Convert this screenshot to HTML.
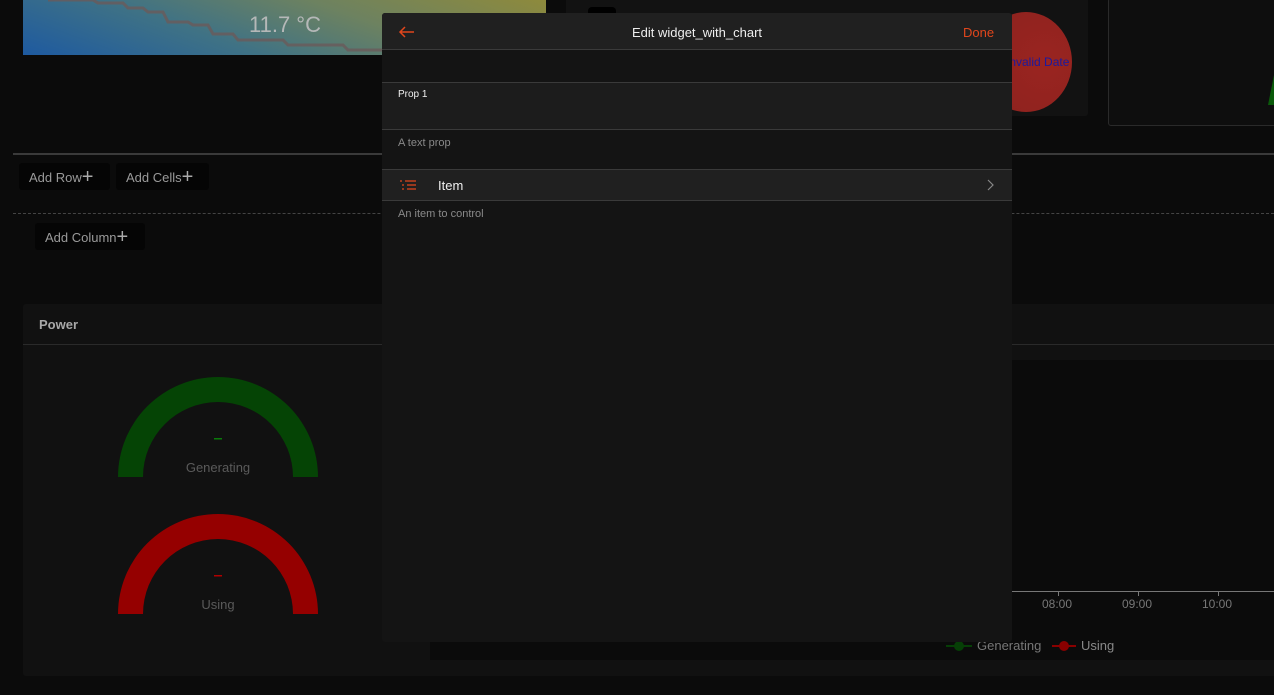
<!DOCTYPE html>
<html><head><meta charset="utf-8"><style>
*{margin:0;padding:0;box-sizing:border-box}
body{width:1274px;height:695px;background:#0b0b0b;position:relative;overflow:hidden;font-family:"Liberation Sans",sans-serif;}
.a{position:absolute}
.btn{position:absolute;background:#050505;border-radius:3px;color:#9a9a9a;font-size:13px;height:27px;line-height:27px;padding-left:10px}
.btn span{font-size:20px;font-weight:300;color:#aaa;position:relative;top:1px}
</style></head><body>
<div class="a" style="left:23px;top:0;width:523px;height:55px;background:linear-gradient(20deg,#1e5aa0 0%,#3f7285 35%,#6d8260 65%,#8e8a3c 100%)"></div>
<svg class="a" style="left:23px;top:0" width="523" height="55"><polyline points="25,0 40,0 70,0 75,3 100,3 105,8 120,8 125,12 140,12 145,22 165,22 170,25 185,25 190,34 210,34 215,40 260,40 265,45 320,45 325,50 380,50" fill="none" stroke="#6a5a5a" stroke-width="3" opacity=".8"/><text x="262" y="32" font-size="22" fill="#b5b8b8" text-anchor="middle" font-family="Liberation Sans">11.7 °C</text></svg>
<div class="a" style="left:566px;top:0;width:522px;height:116px;background:#121212;border-radius:0 0 3px 3px"></div>
<div class="a" style="left:588px;top:7px;width:28px;height:20px;background:#000;border-radius:4px"></div>
<div class="a" style="left:980px;top:12px;width:92px;height:100px;border-radius:50%;background:radial-gradient(circle at 70% 50%,#9a2420,#8c221e)"></div>
<div class="a" style="left:1006px;top:55px;color:#1a1aa0;font-size:12px">Invalid Date</div>
<div class="a" style="left:1108px;top:-2px;width:170px;height:128px;border:1px solid #2a2a2a;border-radius:3px;background:#0e0e0e"></div>
<div class="a" style="left:1268px;top:75px;width:6px;height:30px;background:#0a5a0a;clip-path:polygon(100% 0,100% 100%,0 100%)"></div>
<div class="a" style="left:13px;top:153px;width:1261px;height:2px;background:#3a3a3a"></div>
<div class="a" style="left:13px;top:213px;width:1261px;border-top:1px dashed #444"></div>
<div class="btn" style="left:19px;top:163px;width:91px">Add Row<span>+</span></div>
<div class="btn" style="left:116px;top:163px;width:93px">Add Cells<span>+</span></div>
<div class="btn" style="left:35px;top:223px;width:110px">Add Column<span>+</span></div>
<div class="a" style="left:23px;top:304px;width:1260px;height:372px;background:#111;border-radius:3px"></div>
<div class="a" style="left:39px;top:317px;color:#a8a8a8;font-weight:bold;font-size:13px">Power</div>
<div class="a" style="left:23px;top:344px;width:1260px;height:1px;background:#2a2a2a"></div>
<div class="a" style="left:430px;top:360px;width:844px;height:300px;background:#0b0b0b"></div>
<div class="a" style="left:1012px;top:591px;width:262px;height:1px;background:#777"></div>
<div class="a" style="left:1058px;top:591px;width:1px;height:5px;background:#777"></div>
<div class="a" style="left:1138px;top:591px;width:1px;height:5px;background:#777"></div>
<div class="a" style="left:1218px;top:591px;width:1px;height:5px;background:#777"></div>
<div class="a" style="left:1042px;top:597px;color:#777;font-size:12px">08:00</div>
<div class="a" style="left:1122px;top:597px;color:#777;font-size:12px">09:00</div>
<div class="a" style="left:1202px;top:597px;color:#777;font-size:12px">10:00</div>
<svg class="a" style="left:940px;top:634px" width="200" height="22"><line x1="6" y1="12" x2="32" y2="12" stroke="#063f06" stroke-width="2"/><circle cx="19" cy="12" r="5" fill="#063f06"/><text x="37" y="16" fill="#777" font-size="13" font-family="Liberation Sans">Generating</text><line x1="112" y1="12" x2="136" y2="12" stroke="#8a0000" stroke-width="2"/><circle cx="124" cy="12" r="5" fill="#8a0000"/><text x="141" y="16" fill="#888" font-size="13" font-family="Liberation Sans">Using</text></svg>
<svg class="a" style="left:118px;top:377px" width="200" height="240">
<path d="M0,100 A100,100 0 0 1 200,100 L175,100 A75,75 0 0 0 25,100 Z" fill="#054405"/>
<rect x="96" y="61" width="8" height="1.5" fill="#0a7a0a"/>
<text x="100" y="95" fill="#5a5a5a" font-size="13" text-anchor="middle" font-family="Liberation Sans">Generating</text>
<path d="M0,237 A100,100 0 0 1 200,237 L175,237 A75,75 0 0 0 25,237 Z" fill="#950000"/>
<rect x="96" y="198" width="8" height="1.5" fill="#b00000"/>
<text x="100" y="232" fill="#5a5a5a" font-size="13" text-anchor="middle" font-family="Liberation Sans">Using</text>
</svg>
<div class="a" style="left:382px;top:13px;width:630px;height:629px;background:#141414;border-radius:3px;overflow:hidden">
 <div class="a" style="left:0;top:0;width:630px;height:37px;background:#202020;border-bottom:1px solid #3a3a3a"></div>
 <svg class="a" style="left:16px;top:12px" width="18" height="14"><path d="M16,7 H2 M7,2 L2,7 L7,12" fill="none" stroke="#e0461c" stroke-width="1.5"/></svg>
 <div class="a" style="left:0;width:630px;top:12px;text-align:center;color:#eee;font-size:13px">Edit widget_with_chart</div>
 <div class="a" style="left:581px;top:12px;color:#e0461c;font-size:13px">Done</div>
 <div class="a" style="left:0;top:69px;width:630px;height:48px;background:#1c1c1c;border-top:1px solid #3a3a3a;border-bottom:1px solid #3a3a3a"></div>
 <div class="a" style="left:16px;top:76px;color:#f0f0f0;font-size:10px">Prop 1</div>
 <div class="a" style="left:16px;top:124px;color:#8a8a8a;font-size:11px">A text prop</div>
 <div class="a" style="left:0;top:156px;width:630px;height:32px;background:#202020;border-top:1px solid #3a3a3a;border-bottom:1px solid #3a3a3a"></div>
 <svg class="a" style="left:17px;top:167px" width="18" height="12"><path d="M1,1h2M6,1h11M3,5h2M8,5h9M3,9h2M8,9h9" stroke="#e0461c" stroke-width="1.3"/></svg>
 <div class="a" style="left:56px;top:165px;color:#eee;font-size:13px">Item</div>
 <svg class="a" style="left:605px;top:166px" width="8" height="12"><path d="M1,1 L6,6 L1,11" fill="none" stroke="#888" stroke-width="1.2"/></svg>
 <div class="a" style="left:16px;top:195px;color:#8a8a8a;font-size:11px">An item to control</div>
</div>
</body></html>
